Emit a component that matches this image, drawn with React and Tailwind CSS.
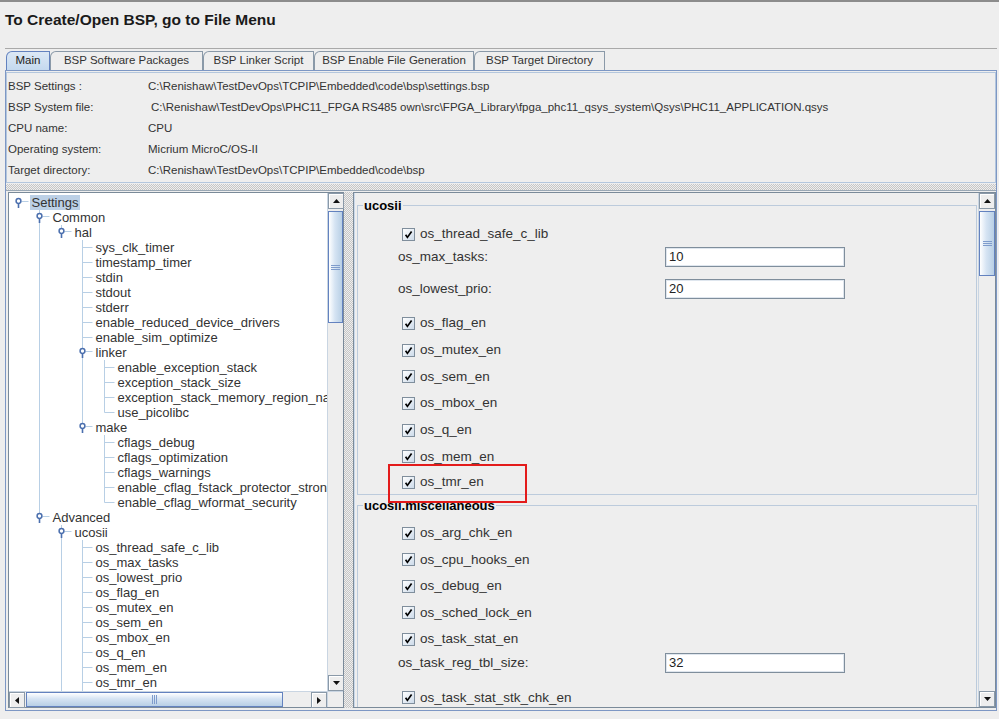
import React from 'react';

const LINE = '#b8cfe5';
const HANDLE = '#4b6fae';

const osItems = [
  'os_thread_safe_c_lib', 'os_max_tasks', 'os_lowest_prio', 'os_flag_en', 'os_mutex_en',
  'os_sem_en', 'os_mbox_en', 'os_q_en', 'os_mem_en', 'os_tmr_en',
];
const miscItems = [
  'os_arg_chk_en', 'os_cpu_hooks_en', 'os_debug_en', 'os_sched_lock_en', 'os_task_stat_en',
  'os_task_reg_tbl_size', 'os_task_stat_stk_chk_en',
];

const tree = ['Settings', [
  ['Common', [
    ['hal', [
      'sys_clk_timer', 'timestamp_timer', 'stdin', 'stdout', 'stderr',
      'enable_reduced_device_drivers', 'enable_sim_optimize',
      ['linker', ['enable_exception_stack', 'exception_stack_size', 'exception_stack_memory_region_name', 'use_picolibc']],
      ['make', ['cflags_debug', 'cflags_optimization', 'cflags_warnings', 'enable_cflag_fstack_protector_strong', 'enable_cflag_wformat_security']],
    ]],
  ]],
  ['Advanced', [
    ['ucosii', [...osItems, ['miscellaneous', miscItems]]],
    ['ucosii.timer', ['os_tmr_cfg_max']],
  ]],
]];

function flatten(node, level, hasNext, guides, out) {
  const leaf = typeof node === 'string';
  out.push({ label: leaf ? node : node[0], level, leaf, hasNext, guides });
  if (!leaf) {
    const kids = node[1];
    const next = level >= 1 ? [...guides, hasNext] : guides;
    kids.forEach((k, i) => flatten(k, level + 1, i < kids.length - 1, next, out));
  }
  return out;
}

const rows = flatten(tree, 0, false, [], []);
const lx = (l) => Math.floor(9 + 21.5 * l) + 0.5;

function TreeRow({ row, selected }) {
  const x = lx(row.level);
  return (
    <div className="h-[15px] flex items-center whitespace-nowrap">
      <svg width={x + 11} height="15" className="shrink-0">
        {row.guides.map((g, j) =>
          g ? <line key={j} x1={lx(j + 1)} x2={lx(j + 1)} y1="0" y2="15" stroke={LINE} /> : null
        )}
        {row.level >= 1 && (
          <line x1={x} x2={x} y1="0" y2={row.hasNext ? 15 : 7.5} stroke={LINE} />
        )}
        {row.leaf ? (
          <line x1={x} x2={x + 10} y1="7.5" y2="7.5" stroke={LINE} />
        ) : (
          <g>
            <line x1={x + 3} x2={x + 10} y1="6.5" y2="6.5" stroke={LINE} />
            <line x1={x} x2={x} y1="8.5" y2="13" stroke={HANDLE} strokeWidth="1.6" />
            <circle cx={x} cy="6" r="2.4" fill="#fff" stroke={HANDLE} strokeWidth="1.5" />
          </g>
        )}
      </svg>
      <span className={`px-[2px] leading-[15px] text-[13px] text-[#333] ${selected ? 'bg-[#bcd0e6]' : ''}`}>
        {row.label}
      </span>
    </div>
  );
}

function Arrow({ dir }) {
  const pts = {
    up: '0,4 3.5,0 7,4',
    down: '0,0 7,0 3.5,4',
    left: '4,0 4,7 0,3.5',
    right: '0,0 4,3.5 0,7',
  }[dir];
  const w = dir === 'up' || dir === 'down' ? 7 : 4;
  const h = dir === 'up' || dir === 'down' ? 4 : 7;
  return (
    <div className="w-[16px] h-[16px] shrink-0 flex items-center justify-center bg-[#eeeeee] border border-[#8a99a8] shadow-[inset_1px_1px_0_#ffffff]">
      <svg width={w} height={h}><polygon points={pts} fill="#111" /></svg>
    </div>
  );
}

function VThumb({ h }) {
  return (
    <div className={`${h} shrink-0 border border-[#6382bf] bg-[linear-gradient(90deg,#ffffff,#d6e4f3_45%,#b8cfe5)] flex flex-col items-center justify-center gap-[1px]`}>
      <div className="w-[9px] h-[1px] bg-[#7f9ccc]" />
      <div className="w-[9px] h-[1px] bg-[#7f9ccc]" />
      <div className="w-[9px] h-[1px] bg-[#7f9ccc]" />
    </div>
  );
}

function Check() {
  return (
    <span className="w-[13px] h-[13px] shrink-0 border border-[#7f8e9c] bg-[linear-gradient(135deg,#ffffff,#cddbea)] flex items-center justify-center">
      <svg width="9" height="9" viewBox="0 0 9 9">
        <path d="M1.6 4.8 L3.4 7.4 L7.6 1.6" stroke="#000" strokeWidth="1.7" fill="none" />
      </svg>
    </span>
  );
}

function CheckRow({ label, h = 'h-[26.5px]' }) {
  return (
    <div className={`${h} flex items-center pl-[44px] gap-[5px]`}>
      <Check />
      <span className="text-[13.5px] text-[#333] leading-[16px]">{label}</span>
    </div>
  );
}

function FieldRow({ label, value, className = '' }) {
  return (
    <div className={`h-[20px] flex items-center pl-[40px] ${className}`}>
      <span className="w-[267px] shrink-0 text-[13.5px] text-[#333]">{label}:</span>
      <div className="w-[180px] h-[20px] border border-[#7f8e9c] bg-white shadow-[inset_0_0_0_1px_#dfe6ee] flex items-center pl-[3px] text-[13px] text-[#222]">
        {value}
      </div>
    </div>
  );
}

const info = [
  ['BSP Settings :', 'C:\\Renishaw\\TestDevOps\\TCPIP\\Embedded\\code\\bsp\\settings.bsp', ''],
  ['BSP System file:', 'C:\\Renishaw\\TestDevOps\\PHC11_FPGA RS485 own\\src\\FPGA_Library\\fpga_phc11_qsys_system\\Qsys\\PHC11_APPLICATION.qsys', 'pl-[3px]'],
  ['CPU name:', 'CPU', ''],
  ['Operating system:', 'Micrium MicroC/OS-II', ''],
  ['Target directory:', 'C:\\Renishaw\\TestDevOps\\TCPIP\\Embedded\\code\\bsp', ''],
];

const tabs = [
  ['Main', 'w-[44px]'],
  ['BSP Software Packages', 'w-[153px]'],
  ['BSP Linker Script', 'w-[111px]'],
  ['BSP Enable File Generation', 'w-[160px]'],
  ['BSP Target Directory', 'w-[131px]'],
];

const checker = 'bg-[repeating-conic-gradient(#c6c6c6_0_25%,#eeeeee_0_50%)] bg-[length:2px_2px]';

export default function App() {
  return (
    <div className="w-[999px] h-[719px] overflow-hidden bg-[#eeeeee] font-['Liberation_Sans',Arial,sans-serif] text-[#222]">
      <div className="h-[2px] bg-[#8c8c8c]" />
      <div className="h-[46px] pl-[5px] pt-[8px] text-[15.5px] leading-[19px] font-bold text-[#1a1a1a]">
        To Create/Open BSP, go to File Menu
      </div>

      <div className="ml-[5px] w-[992px] border-t border-[#a9a9a9]">
        {/* tab strip */}
        <div className="h-[21px] flex items-end pl-[1px]">
          {tabs.map(([t, w], i) => (
            <div
              key={t}
              className={`${w} h-[19px] shrink-0 flex items-center justify-center rounded-tl-[6px] border-t border-l border-r text-[11.5px] ${
                i === 0
                  ? 'bg-[linear-gradient(180deg,#dce8f5,#c4d9ef)] border-[#6382bf] text-[#222]'
                  : 'bg-[#eeeeee] border-[#8a99a8] text-[#333]'
              }`}
            >
              {t}
            </div>
          ))}
        </div>

        {/* tab body */}
        <div className="h-[641px] border-t border-l border-r border-b border-[#7d97c4]">
          <div className="mt-[1px] h-[111px] border border-[#b3c6dd] pt-[3px] pl-[1px]">
            {info.map(([k, v, p]) => (
              <div key={k} className="h-[21px] flex items-center text-[11.5px] text-[#333] whitespace-nowrap">
                <span className="w-[140px] shrink-0">{k}</span>
                <span className={p}>{v}</span>
              </div>
            ))}
          </div>

          <div className={`mt-[1px] h-[6px] ${checker}`} />

          {/* lower split */}
          <div className="h-[519px] flex pl-[2px] border-t border-[#9aa8b5]">
            {/* left: tree */}
            <div className="mt-[1px] w-[336px] h-[516px] shrink-0 border border-[#7a8a99] flex flex-col">
              <div className="h-[498px] flex">
                <div className="flex-1 bg-white overflow-hidden pt-[2px]">
                  {rows.map((r, i) => (
                    <TreeRow key={i} row={r} selected={i === 0} />
                  ))}
                </div>
                <div className="w-[16px] flex flex-col bg-[#eeeeee] border-l border-[#c9d5e2]">
                  <Arrow dir="up" />
                  <div className="h-[2px]" />
                  <VThumb h="h-[112px]" />
                  <div className="flex-1" />
                  <Arrow dir="down" />
                </div>
              </div>
              <div className="h-[16px] flex bg-[#eeeeee] border-t border-[#c9d5e2]">
                <Arrow dir="left" />
                <div className="w-[1px]" />
                <div className="w-[257px] border border-[#6382bf] bg-[linear-gradient(180deg,#ffffff,#d6e4f3_45%,#b8cfe5)] flex items-center justify-center gap-[1px]">
                  <div className="w-[1px] h-[9px] bg-[#7f9ccc]" />
                  <div className="w-[1px] h-[9px] bg-[#7f9ccc]" />
                  <div className="w-[1px] h-[9px] bg-[#7f9ccc]" />
                </div>
                <div className="flex-1" />
                <Arrow dir="right" />
                <div className="w-[16px] border-l border-[#c9d5e2]" />
              </div>
            </div>

            {/* vertical splitter */}
            <div className={`w-[9px] shrink-0 my-[1px] mx-0 ${checker}`} />

            {/* right: properties */}
            <div className="mt-[1px] h-[516px] flex-1 border border-[#7a8a99] flex">
              <div className="relative flex-1 overflow-hidden border-l border-[#c9d8ea] pt-[5px]">
                <fieldset className="ml-[2px] mr-[1px] border border-[#bccbdc]">
                  <legend className="ml-[5px] px-[1px] text-[13px] leading-[15px] font-bold text-black">ucosii</legend>
                  <div className="pt-[8px]">
                    <CheckRow label="os_thread_safe_c_lib" h="h-[26px]" />
                    <FieldRow label="os_max_tasks" value="10" />
                    <FieldRow label="os_lowest_prio" value="20" className="mt-[12px]" />
                    <div className="mt-[11px]">
                      <CheckRow label="os_flag_en" h="h-[26.7px]" />
                      <CheckRow label="os_mutex_en" h="h-[26.7px]" />
                      <CheckRow label="os_sem_en" h="h-[26.7px]" />
                      <CheckRow label="os_mbox_en" h="h-[26.7px]" />
                      <CheckRow label="os_q_en" h="h-[26.7px]" />
                      <CheckRow label="os_mem_en" h="h-[26.7px]" />
                      <CheckRow label="os_tmr_en" h="h-[24px]" />
                    </div>
                  </div>
                </fieldset>

                <fieldset className="mt-[3px] ml-[2px] mr-[1px] border border-[#bccbdc]">
                  <legend className="ml-[5px] px-[1px] text-[13px] leading-[15px] font-bold text-black">ucosii.miscellaneous</legend>
                  <div className="pt-[7px]">
                    <CheckRow label="os_arg_chk_en" />
                    <CheckRow label="os_cpu_hooks_en" />
                    <CheckRow label="os_debug_en" />
                    <CheckRow label="os_sched_lock_en" />
                    <CheckRow label="os_task_stat_en" />
                    <FieldRow label="os_task_reg_tbl_size" value="32" />
                    <div className="mt-[12px]">
                      <CheckRow label="os_task_stat_stk_chk_en" />
                      <CheckRow label="os_task_del_en" />
                    </div>
                  </div>
                </fieldset>

                {/* annotation box */}
                <div className="absolute left-[33px] top-[271px] w-[139px] h-[39px] border-2 border-[#e31b1b]" />
              </div>

              <div className="w-[17px] flex flex-col bg-[#eeeeee] border-l border-[#c9d5e2]">
                <Arrow dir="up" />
                <div className="h-[2px]" />
                <VThumb h="h-[65px]" />
                <div className="flex-1" />
                <Arrow dir="down" />
              </div>
            </div>
          </div>
        </div>
      </div>
    </div>
  );
}
